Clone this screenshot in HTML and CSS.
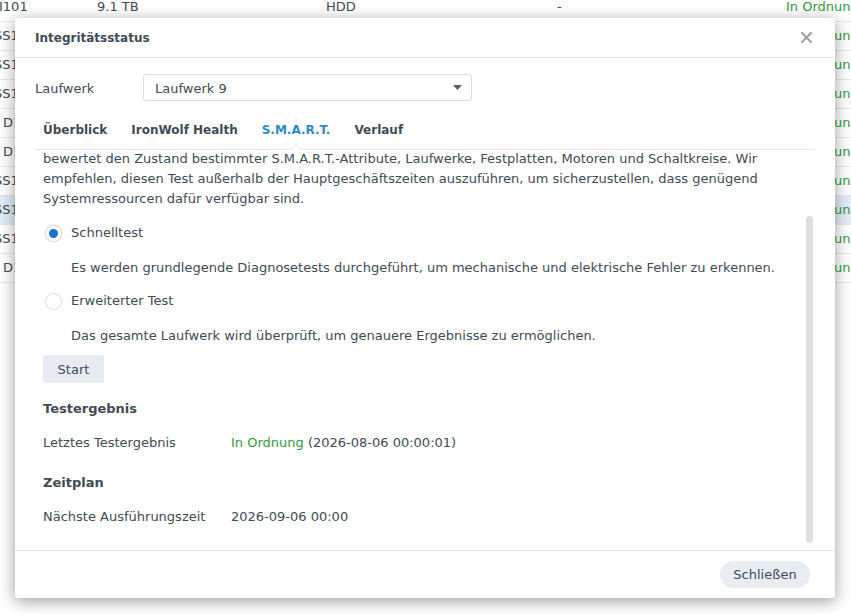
FILE: index.html
```html
<!DOCTYPE html>
<html lang="de">
<head>
<meta charset="utf-8">
<title>Integritätsstatus</title>
<link rel="stylesheet" href="styles.css">
</head>
<body>
<div class="page">
  <div class="table">
    <div class="row"><span class="c1 i">I101</span><span>9.1 TB</span><span>HDD</span><span>-</span><span class="ok">In Ordnung</span></div>
    <div class="row"><span class="c1">SS1</span><span>9.1 TB</span><span>HDD</span><span>-</span><span class="ok">In Ordnung</span></div>
    <div class="row"><span class="c1">SS1</span><span>9.1 TB</span><span>HDD</span><span>-</span><span class="ok">In Ordnung</span></div>
    <div class="row"><span class="c1">SS1</span><span>9.1 TB</span><span>HDD</span><span>-</span><span class="ok">In Ordnung</span></div>
    <div class="row"><span class="c1 d">D1</span><span>9.1 TB</span><span>HDD</span><span>-</span><span class="ok">In Ordnung</span></div>
    <div class="row"><span class="c1 d">D1</span><span>9.1 TB</span><span>HDD</span><span>-</span><span class="ok">In Ordnung</span></div>
    <div class="row"><span class="c1">SS1</span><span>9.1 TB</span><span>HDD</span><span>-</span><span class="ok">In Ordnung</span></div>
    <div class="row selected"><span class="c1">SS1</span><span>9.1 TB</span><span>HDD</span><span>-</span><span class="ok">In Ordnung</span></div>
    <div class="row"><span class="c1">SS1</span><span>9.1 TB</span><span>HDD</span><span>-</span><span class="ok">In Ordnung</span></div>
    <div class="row"><span class="c1 d">D1</span><span>9.1 TB</span><span>HDD</span><span>-</span><span class="ok">In Ordnung</span></div>
  </div>

  <div class="dialog">
    <div class="dlg-head">
      <span class="dlg-title">Integritätsstatus</span>
      <svg class="close" width="11" height="11" viewBox="0 0 11 11"><path d="M1 1 L10 10 M10 1 L1 10" stroke="#9ea3a8" stroke-width="2.2" fill="none" stroke-linecap="square"/></svg>
    </div>
    <div class="dlg-body">
      <div class="field">
        <span class="field-label">Laufwerk</span>
        <div class="select">
          <span>Laufwerk 9</span>
          <svg width="9" height="5" viewBox="0 0 9 5"><path d="M0 0 H9 L4.5 5 Z" fill="#5a6169"/></svg>
        </div>
      </div>
      <div class="tabs">
        <span class="tab">Überblick</span>
        <span class="tab">IronWolf Health</span>
        <span class="tab active">S.M.A.R.T.</span>
        <span class="tab">Verlauf</span>
      </div>
      <div class="scroll">
        <div class="scroll-content">
          <p class="intro">bewertet den Zustand bestimmter S.M.A.R.T.-Attribute, Laufwerke, Festplatten, Motoren und Schaltkreise. Wir empfehlen, diesen Test außerhalb der Hauptgeschäftszeiten auszuführen, um sicherzustellen, dass genügend Systemressourcen dafür verfügbar sind.</p>
          <div class="option"><span class="radio checked"></span><span>Schnelltest</span></div>
          <div class="option-desc">Es werden grundlegende Diagnosetests durchgeführt, um mechanische und elektrische Fehler zu erkennen.</div>
          <div class="option"><span class="radio"></span><span>Erweiterter Test</span></div>
          <div class="option-desc">Das gesamte Laufwerk wird überprüft, um genauere Ergebnisse zu ermöglichen.</div>
          <button class="btn start">Start</button>
          <div class="section">Testergebnis</div>
          <div class="info"><span class="info-label">Letztes Testergebnis</span><span><span class="ok">In Ordnung</span> (2026-08-06 00:00:01)</span></div>
          <div class="section second">Zeitplan</div>
          <div class="info"><span class="info-label">Nächste Ausführungszeit</span><span>2026-09-06 00:00</span></div>
        </div>
        <div class="scrollbar"><div class="thumb"></div></div>
      </div>
    </div>
    <div class="dlg-foot">
      <button class="btn pill">Schließen</button>
    </div>
  </div>
</div>
</body>
</html>
```

FILE: styles.css
```css
* { box-sizing: border-box; }

html, body {
  margin: 0;
  padding: 0;
}

body {
  font-family: "DejaVu Sans", Verdana, sans-serif;
  font-size: 13px;
  color: #414b55;
}

.page {
  position: relative;
  width: 851px;
  height: 614px;
  overflow: hidden;
  background: #fff;
}

/* background table */
.table {
  margin-top: -7px;
}

.row {
  display: grid;
  grid-template-columns: 97px 229px 231px 229px 1fr;
  height: 29px;
  line-height: 28px;
  border-bottom: 1px solid #e6e9ec;
  white-space: nowrap;
}

.row.selected {
  background: #e3edf7;
}

.c1 {
  margin-left: -6px;
}

.c1.i {
  margin-left: -1px;
}

.c1.d {
  margin-left: 3px;
}

.ok {
  color: #2f9e3c;
}

/* dialog */
.dialog {
  position: absolute;
  left: 15px;
  top: 18px;
  width: 820px;
  height: 580px;
  background: #fff;
  border-radius: 3px;
  box-shadow: 0 3px 16px rgba(0, 0, 0, 0.4);
  display: flex;
  flex-direction: column;
}

.dlg-head {
  height: 40px;
  flex: none;
  border-bottom: 1px solid #e5e8eb;
  padding: 0 23px 0 20px;
  display: flex;
  align-items: center;
  justify-content: space-between;
}

.dlg-title {
  font-size: 12px;
  font-weight: bold;
}

.dlg-body {
  flex: 1;
  min-height: 0;
  padding: 0 20px;
  display: flex;
  flex-direction: column;
}

.field {
  margin-top: 16px;
  height: 27px;
  display: flex;
  align-items: center;
  flex: none;
  line-height: 27px;
}

.field-label {
  width: 108px;
  padding-top: 1px;
}

.select {
  width: 329px;
  height: 27px;
  border: 1px solid #d8dde2;
  border-radius: 3px;
  padding: 0 9px 0 11px;
  display: flex;
  align-items: center;
  justify-content: space-between;
}

.select span {
  padding-top: 1px;
}

.tabs {
  margin-top: 10px;
  height: 39px;
  flex: none;
  border-bottom: 1px solid #e1e5e9;
  display: flex;
  align-items: center;
}

.tabs .tab:first-child {
  margin-left: -4px;
}

.tab {
  position: relative;
  padding: 1px 12px 0;
  font-size: 12px;
  font-weight: bold;
  line-height: 37px;
  height: 38px;
}

.tab.active {
  color: #2d8bc4;
}

.tab.active::before,
.tab.active::after {
  content: "";
  position: absolute;
  left: 50%;
  width: 0;
  height: 0;
  border-style: solid;
  border-color: transparent;
  z-index: 2;
}

.tab.active::before {
  bottom: -1px;
  margin-left: -6px;
  border-width: 0 6px 6px 6px;
  border-bottom-color: #dfe3e7;
}

.tab.active::after {
  bottom: -1px;
  margin-left: -5px;
  border-width: 0 5px 5px 5px;
  border-bottom-color: #fff;
}

.scroll {
  flex: 1;
  min-height: 0;
  display: flex;
  overflow: hidden;
}

.scroll-content {
  flex: 1;
  min-width: 0;
  padding-left: 8px;
  line-height: 20px;
}

.intro {
  margin: -1px 0 0 0;
}

.option {
  margin-top: 14px;
  height: 20px;
  display: flex;
  align-items: center;
}

.option + .option-desc {
  margin-top: 15px;
}

.option-desc + .option {
  margin-top: 13px;
}

.radio {
  position: relative;
  width: 17px;
  height: 17px;
  margin-left: 2px;
  margin-right: 9px;
  border: 1px solid #d6dbe0;
  border-radius: 50%;
  background: #fff;
  flex: none;
}

.radio.checked {
  border-color: #d3dde8;
  box-shadow: 0 0 0 1px #eef3f8;
}

.radio.checked::after {
  content: "";
  position: absolute;
  left: 3px;
  top: 3px;
  width: 9px;
  height: 9px;
  border-radius: 50%;
  background: #1a71d3;
}

.option-desc {
  padding-left: 28px;
}

.btn {
  font-family: "DejaVu Sans", Verdana, sans-serif;
  font-size: 13px;
  color: #414b55;
  border: none;
  background: #e7ecf2;
  padding: 0;
  display: block;
}

.start {
  margin-top: 9px;
  width: 61px;
  height: 28px;
  border-radius: 3px;
}

.section {
  margin-top: 16px;
  font-weight: bold;
}

.section.second {
  margin-top: 20px;
}

.info {
  margin-top: 14px;
  display: flex;
}

.info-label {
  width: 188px;
  flex: none;
}

.scrollbar {
  width: 10px;
  flex: none;
  padding: 66px 2px 7px 1px;
  display: flex;
}

.thumb {
  flex: 1;
  background: #dedfe1;
  border-radius: 4px;
}

.dlg-foot {
  height: 48px;
  flex: none;
  border-top: 1px solid #e5e8eb;
  display: flex;
  align-items: center;
  justify-content: flex-end;
  padding-right: 25px;
}

.pill {
  width: 90px;
  height: 27px;
  border-radius: 14px;
  background: #e8edf3;
}
```
